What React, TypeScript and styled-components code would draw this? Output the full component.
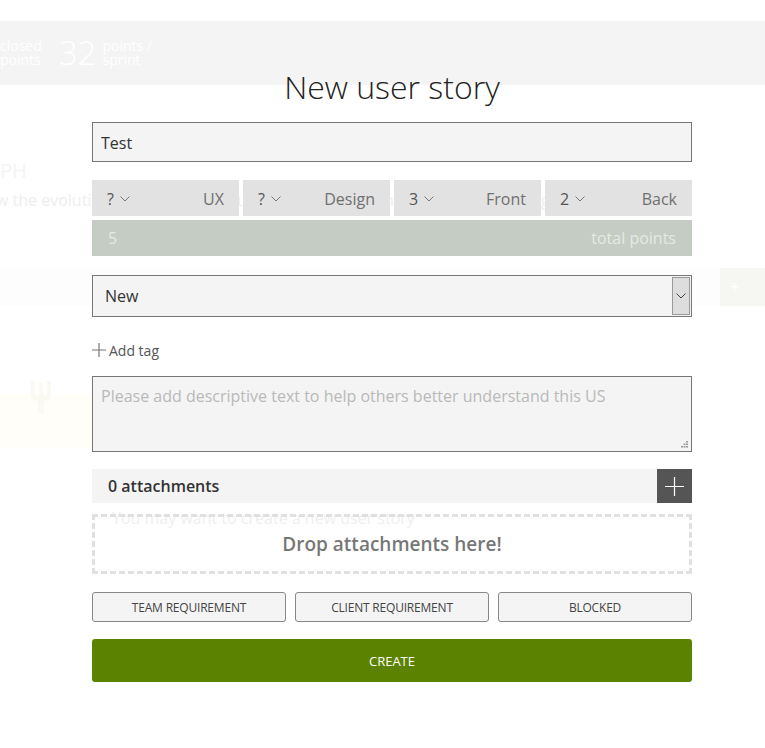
import React from "react";
import styled, { createGlobalStyle } from "styled-components";

const GlobalStyle = createGlobalStyle`
  html, body { margin: 0; padding: 0; background: #fff; }
  body { font-family: "Open Sans", "Liberation Sans", sans-serif; }
  * { box-sizing: border-box; }
`;

const Page = styled.div`
  position: relative;
  width: 765px;
  height: 748px;
  overflow: hidden;
  background: #fff;
`;

/* ---------- ghost page behind the lightbox ---------- */
const GhostBack = styled.div`
  position: absolute;
  inset: 0;
  z-index: 0;
  display: flex;
  flex-direction: column;
  pointer-events: none;
`;

const StatsBand = styled.div`
  margin-top: 21px;
  height: 64px;
  background: #f4f4f4;
  display: flex;
  align-items: center;
  color: #fff;
`;

const StatLabel = styled.span<{ $gap: number }>`
  font-size: 14px;
  line-height: 14px;
  font-weight: 400;
  margin-right: ${(p) => p.$gap}px;
`;

const StatNumber = styled.span`
  font-size: 33px;
  font-weight: 300;
  line-height: 40px;
  margin-right: 6px;
`;

const GhostHeading = styled.div`
  margin-top: 75px;
  font-size: 20px;
  line-height: 22px;
  color: #f4f4f4;
`;

const GhostSentence = styled.div`
  margin-top: 7px;
  margin-left: -4px;
  font-size: 16px;
  line-height: 22px;
  color: #eeeeee;
  white-space: nowrap;
`;

const GhostStrip = styled.div`
  margin-top: 57px;
  height: 38px;
  display: flex;
  background: #fdfdfd;
`;

const GhostAddButton = styled.div`
  width: 45px;
  margin-left: auto;
  background: #f6f7f2;
  color: #fff;
  font-size: 16px;
  display: flex;
  align-items: center;
  padding-left: 10px;
`;

const GhostCard = styled.div`
  margin-top: 88px;
  width: 92px;
  height: 55px;
  background: #fffef8;
  position: relative;
`;

const GhostLogo = styled.svg`
  position: absolute;
  left: 28px;
  top: -15px;
`;

const GhostNote = styled.div`
  margin-top: 58px;
  margin-left: 112px;
  font-size: 16px;
  line-height: 22px;
  color: #efefef;
  white-space: nowrap;
`;

/* ---------- lightbox ---------- */
const Lightbox = styled.main`
  position: relative;
  z-index: 1;
  width: 600px;
  margin-left: 92px;
  padding-top: 68px;
  display: flex;
  flex-direction: column;
`;

const Title = styled.h2`
  margin: 0 0 16px;
  font-size: 32px;
  line-height: 38px;
  font-weight: 300;
  color: #222;
  text-align: center;
`;

const SubjectInput = styled.input`
  height: 40px;
  width: 100%;
  margin: 0 0 18px;
  padding: 1px 8px 0;
  border: 1px solid #777;
  background: #f4f4f4;
  font-family: "Open Sans", sans-serif;
  font-size: 16px;
  color: #333;
  outline: none;
`;

const PointsRow = styled.div`
  display: grid;
  grid-template-columns: repeat(4, 1fr);
  gap: 4px;
  height: 36px;
  margin-bottom: 4px;
`;

const PointItem = styled.div`
  display: flex;
  align-items: center;
  justify-content: space-between;
  padding: 1px 15px 0;
  background: #e2e2e2;
  font-size: 16px;
`;

const PointValue = styled.span`
  display: flex;
  align-items: center;
  gap: 6px;
  color: #555;
`;

const RoleName = styled.span`
  color: #707070;
`;

const TotalRow = styled.div`
  height: 36px;
  margin-bottom: 19px;
  padding: 0 16px;
  display: flex;
  align-items: center;
  justify-content: space-between;
  background: #c4ccc3;
  color: #e6e9e5;
  font-size: 16px;
`;

const SelectBox = styled.div`
  height: 42px;
  margin-bottom: 23px;
  border: 1px solid #777;
  background: #f4f4f4;
  display: flex;
  align-items: stretch;
  font-size: 16px;
  color: #333;
`;

const SelectValue = styled.span`
  flex: 1;
  display: flex;
  align-items: center;
  padding-left: 12px;
`;

const SelectArrow = styled.span`
  width: 18px;
  margin: 1px;
  background: #dddddd;
  border: 1px solid #999;
  display: flex;
  align-items: center;
  justify-content: center;
`;

const TagLine = styled.div`
  height: 20px;
  margin-bottom: 16px;
  display: flex;
  align-items: center;
  gap: 3px;
  font-size: 14px;
  color: #555;
`;

const DescriptionWrap = styled.div`
  position: relative;
  height: 76px;
  margin-bottom: 17px;
`;

const Description = styled.textarea`
  height: 76px;
  width: 100%;
  margin: 0;
  padding: 7px 8px;
  border: 1px solid #777;
  background: #f4f4f4;
  font-family: "Open Sans", sans-serif;
  font-size: 16px;
  line-height: 24px;
  color: #333;
  outline: none;
  resize: none;
  display: block;
  &::placeholder {
    color: #b9b9b9;
  }
`;

const ResizeGrip = styled.svg`
  position: absolute;
  right: 4px;
  bottom: 4px;
`;

const AttachHeader = styled.div`
  height: 34px;
  margin-bottom: 11px;
  display: flex;
  align-items: center;
  justify-content: space-between;
  background: #f4f4f4;
  padding-left: 16px;
`;

const AttachTitle = styled.span`
  font-size: 16px;
  font-weight: 600;
  color: #333;
`;

const AddAttachButton = styled.span`
  width: 35px;
  height: 34px;
  background: #555;
  display: flex;
  align-items: center;
  justify-content: center;
`;

const DropZone = styled.div`
  height: 60px;
  margin-bottom: 18px;
  border: 3px dashed #e0e0e0;
  display: flex;
  align-items: center;
  justify-content: center;
  font-size: 19px;
  font-weight: 600;
  color: #777;
`;

const FlagRow = styled.div`
  display: grid;
  grid-template-columns: repeat(3, 1fr);
  gap: 9px;
  height: 30px;
  margin-bottom: 17px;
`;

const FlagButton = styled.button`
  border: 1px solid #888;
  border-radius: 3px;
  background: #f4f4f4;
  font-family: "Open Sans", sans-serif;
  font-size: 12px;
  color: #444;
  text-transform: uppercase;
  letter-spacing: -0.2px;
  padding: 0;
`;

const CreateButton = styled.button`
  height: 43px;
  border: none;
  border-radius: 3px;
  background: #5b8200;
  color: #fff;
  font-family: "Open Sans", sans-serif;
  font-size: 13px;
  text-transform: uppercase;
  padding: 0;
`;

const Chevron = ({ color = "#666" }: { color?: string }) => (
  <svg width="10" height="6" viewBox="0 0 10 6" fill="none">
    <path d="M0.5 0.5 L5 5 L9.5 0.5" stroke={color} strokeWidth="1" />
  </svg>
);

const Plus = ({ size, color }: { size: number; color: string }) => (
  <svg width={size} height={size} viewBox={`0 0 ${size} ${size}`} fill="none">
    <path
      d={`M${size / 2} 0 V${size} M0 ${size / 2} H${size}`}
      stroke={color}
      strokeWidth="1.2"
    />
  </svg>
);

const points = [
  { value: "?", role: "UX" },
  { value: "?", role: "Design" },
  { value: "3", role: "Front" },
  { value: "2", role: "Back" },
];

const flags = ["Team requirement", "Client requirement", "Blocked"];

export default function App() {
  return (
    <Page>
      <GlobalStyle />
      <GhostBack>
        <StatsBand>
          <StatLabel $gap={17}>
            closed
            <br />
            points
          </StatLabel>
          <StatNumber>32</StatNumber>
          <StatLabel $gap={0}>
            points /
            <br />
            sprint
          </StatLabel>
        </StatsBand>
        <GhostHeading>PH</GhostHeading>
        <GhostSentence>
          w the evolution of the project you have to set up points and sprints through the Admin
        </GhostSentence>
        <GhostStrip>
          <GhostAddButton>+</GhostAddButton>
        </GhostStrip>
        <GhostCard>
          <GhostLogo width="26" height="36" viewBox="0 0 26 36">
            <path
              d="M3 2 V16 Q3 22 10 22 V34 H16 V22 Q23 22 23 16 V2 H19 V16 H15 V4 H11 V16 H7 V2 Z"
              fill="#fbfaf2"
            />
          </GhostLogo>
        </GhostCard>
        <GhostNote>You may want to create a new user story</GhostNote>
      </GhostBack>

      <Lightbox>
        <Title>New user story</Title>
        <SubjectInput defaultValue="Test" readOnly />
        <PointsRow>
          {points.map((p) => (
            <PointItem key={p.role}>
              <PointValue>
                {p.value}
                <Chevron color="#777" />
              </PointValue>
              <RoleName>{p.role}</RoleName>
            </PointItem>
          ))}
        </PointsRow>
        <TotalRow>
          <span>5</span>
          <span>total points</span>
        </TotalRow>
        <SelectBox>
          <SelectValue>New</SelectValue>
          <SelectArrow>
            <Chevron color="#444" />
          </SelectArrow>
        </SelectBox>
        <TagLine>
          <Plus size={14} color="#777" />
          <span>Add tag</span>
        </TagLine>
        <DescriptionWrap>
          <Description placeholder="Please add descriptive text to help others better understand this US" />
          <ResizeGrip width="7" height="7" viewBox="0 0 7 7">
            <g fill="#999">
              <rect x="5" y="0" width="2" height="1.5" />
              <rect x="2.5" y="2.5" width="2" height="1.5" />
              <rect x="5" y="2.5" width="2" height="1.5" />
              <rect x="0" y="5" width="2" height="1.5" />
              <rect x="2.5" y="5" width="2" height="1.5" />
              <rect x="5" y="5" width="2" height="1.5" />
            </g>
          </ResizeGrip>
        </DescriptionWrap>
        <AttachHeader>
          <AttachTitle>0 attachments</AttachTitle>
          <AddAttachButton>
            <Plus size={19} color="#fff" />
          </AddAttachButton>
        </AttachHeader>
        <DropZone>Drop attachments here!</DropZone>
        <FlagRow>
          {flags.map((f) => (
            <FlagButton key={f}>{f}</FlagButton>
          ))}
        </FlagRow>
        <CreateButton>Create</CreateButton>
      </Lightbox>
    </Page>
  );
}
